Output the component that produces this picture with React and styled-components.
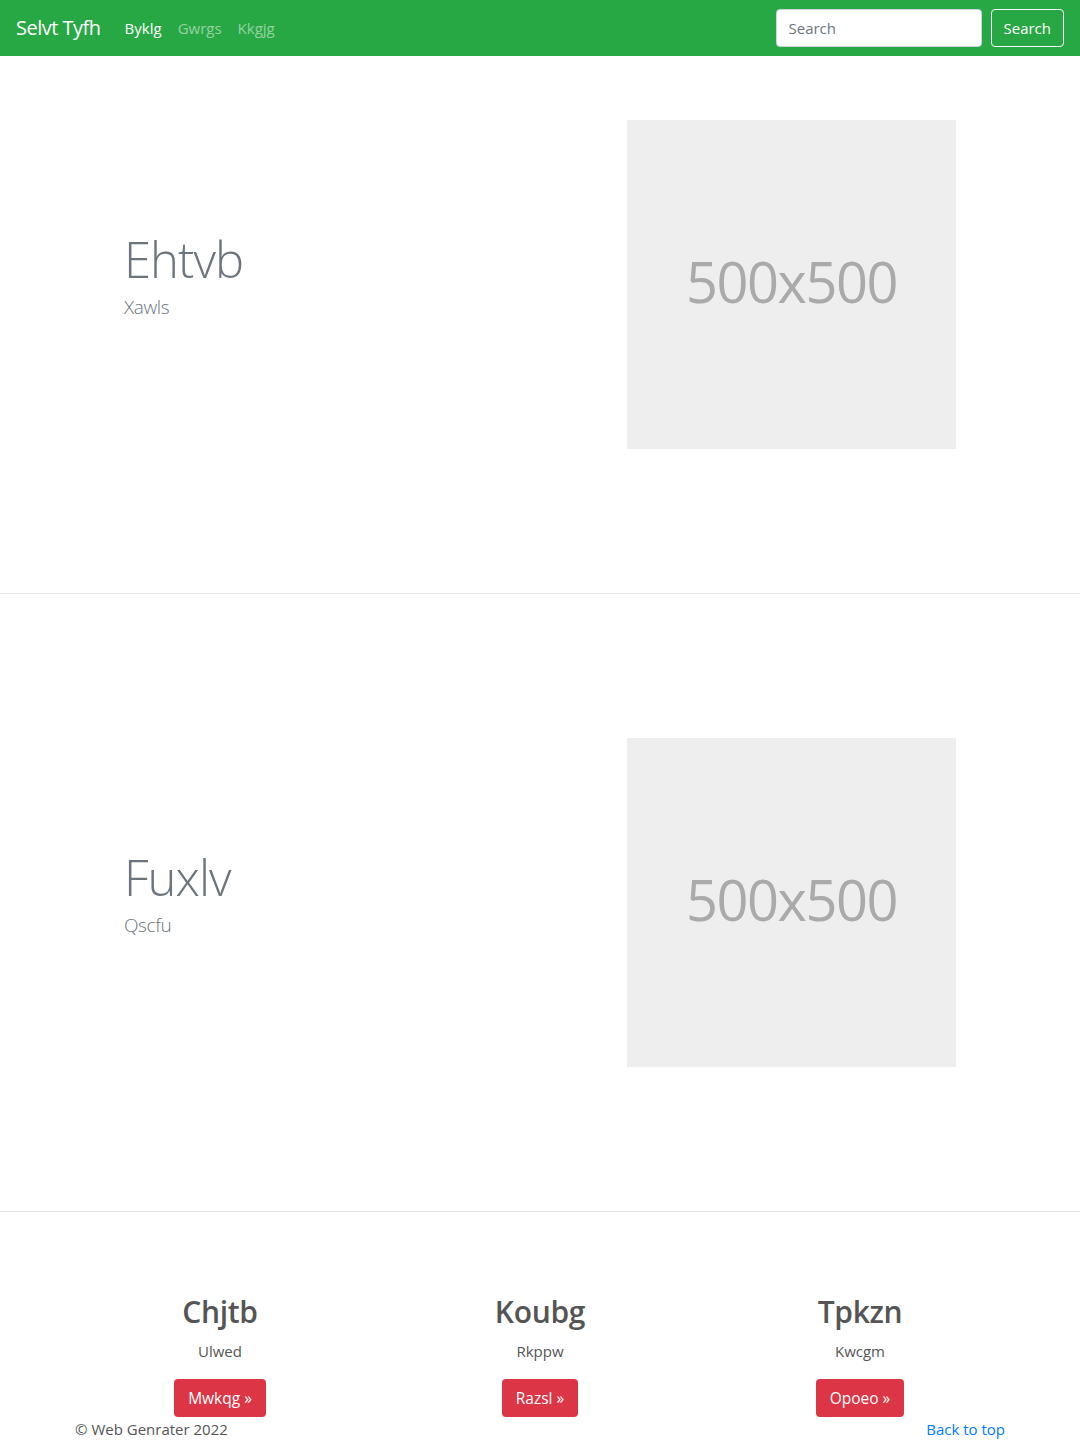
import React from "react";
import styled, { createGlobalStyle } from "styled-components";

const Global = createGlobalStyle`
  * { box-sizing: border-box; }
  body {
    margin: 0;
    font-family: "Open Sans", "Noto Sans", sans-serif;
    font-size: 16px;
    line-height: 1.5;
    color: #212529;
    background: #fff;
  }
`;

const Navbar = styled.nav`
  height: 56px;
  background: #28a745;
  display: flex;
  align-items: center;
  padding: 0 16px;
`;

const Brand = styled.a`
  font-size: 20px;
  color: #fff;
  margin-right: 16px;
  text-decoration: none;
  letter-spacing: -0.5px;
`;

const NavList = styled.div`
  display: flex;
  flex: 1;
`;

const NavLink = styled.a`
  padding: 8px;
  font-size: 15px;
  color: ${(p) => (p.$active ? "#fff" : "rgba(255,255,255,0.5)")};
  text-decoration: none;
`;

const SearchForm = styled.form`
  display: flex;
  align-items: center;
  gap: 9px;
`;

const SearchInput = styled.input`
  width: 206px;
  height: 38px;
  padding: 6px 12px;
  font: inherit;
  font-size: 15px;
  color: #495057;
  border: 1px solid #ced4da;
  border-radius: 4px;
  outline: none;
  &::placeholder { color: #6c757d; }
`;

const OutlineButton = styled.button`
  height: 38px;
  padding: 6px 12px;
  font: inherit;
  font-size: 15px;
  color: #fff;
  background: transparent;
  border: 1px solid #f8f9fa;
  border-radius: 4px;
`;

const Hero = styled.section`
  border-bottom: 1px solid #e5e5e5;
  padding: ${(p) => p.$top}px 0 144px;
`;

const HeroRow = styled.div`
  width: 960px;
  margin: 0 auto;
  display: grid;
  grid-template-columns: 1fr 329px;
  align-items: center;
  padding: 0 64px 0 64px;
`;

const HeroText = styled.div`
  padding-bottom: 18px;
`;

const HeroTitle = styled.h1`
  margin: 0 0 4px;
  font-size: 49px;
  font-weight: 300;
  line-height: 1.2;
  color: #6c757d;
  letter-spacing: -1px;
`;

const HeroLead = styled.p`
  margin: 0;
  font-size: 19px;
  font-weight: 300;
  color: #6c757d;
  letter-spacing: -0.4px;
`;

const Placeholder = styled.div`
  width: 329px;
  height: 329px;
  padding-bottom: 8px;
  background: #eee;
  color: #aaa;
  display: flex;
  align-items: center;
  justify-content: center;
  font-size: 56px;
  letter-spacing: -1.5px;
`;

const Features = styled.section`
  width: 960px;
  margin: 0 auto;
  padding-top: 80px;
  display: grid;
  grid-template-columns: repeat(3, 1fr);
`;

const Feature = styled.div`
  text-align: center;
  padding: 0 15px;
`;

const FeatureTitle = styled.h2`
  margin: 0 0 8px;
  font-size: 30px;
  font-weight: 600;
  line-height: 39px;
  color: #555;
  letter-spacing: -0.3px;
`;

const FeatureText = styled.p`
  margin: 0 0 16px;
  font-size: 15px;
  line-height: 24px;
  color: #555;
`;

const DangerButton = styled.a`
  display: inline-block;
  height: 38px;
  padding: 6px 14px;
  font-size: 15.5px;
  line-height: 26px;
  color: #fff;
  background: #dc3545;
  border-radius: 4px;
  text-decoration: none;
`;

const Footer = styled.footer`
  width: 960px;
  margin: 0 auto;
  padding: 0 15px;
  display: flex;
  justify-content: space-between;
  font-size: 15px;
  line-height: 24px;
  color: #555;
`;

const TopLink = styled.a`
  color: #007bff;
  text-decoration: none;
`;

const heroes = [
  { title: "Ehtvb", lead: "Xawls", top: 64 },
  { title: "Fuxlv", lead: "Qscfu", top: 144 },
];

const features = [
  { title: "Chjtb", text: "Ulwed", btn: "Mwkqg" },
  { title: "Koubg", text: "Rkppw", btn: "Razsl" },
  { title: "Tpkzn", text: "Kwcgm", btn: "Opoeo" },
];

export default function App() {
  return (
    <>
      <Global />
      <Navbar>
        <Brand href="#">Selvt Tyfh</Brand>
        <NavList>
          <NavLink href="#" $active>Byklg</NavLink>
          <NavLink href="#">Gwrgs</NavLink>
          <NavLink href="#">Kkgjg</NavLink>
        </NavList>
        <SearchForm onSubmit={(e) => e.preventDefault()}>
          <SearchInput placeholder="Search" />
          <OutlineButton type="submit">Search</OutlineButton>
        </SearchForm>
      </Navbar>
      {heroes.map((h) => (
        <Hero key={h.title} $top={h.top}>
          <HeroRow>
            <HeroText>
              <HeroTitle>{h.title}</HeroTitle>
              <HeroLead>{h.lead}</HeroLead>
            </HeroText>
            <Placeholder>500x500</Placeholder>
          </HeroRow>
        </Hero>
      ))}
      <Features>
        {features.map((f) => (
          <Feature key={f.title}>
            <FeatureTitle>{f.title}</FeatureTitle>
            <FeatureText>{f.text}</FeatureText>
            <DangerButton href="#">{f.btn} »</DangerButton>
          </Feature>
        ))}
      </Features>
      <Footer>
        <span>© Web Genrater 2022</span>
        <TopLink href="#">Back to top</TopLink>
      </Footer>
    </>
  );
}
